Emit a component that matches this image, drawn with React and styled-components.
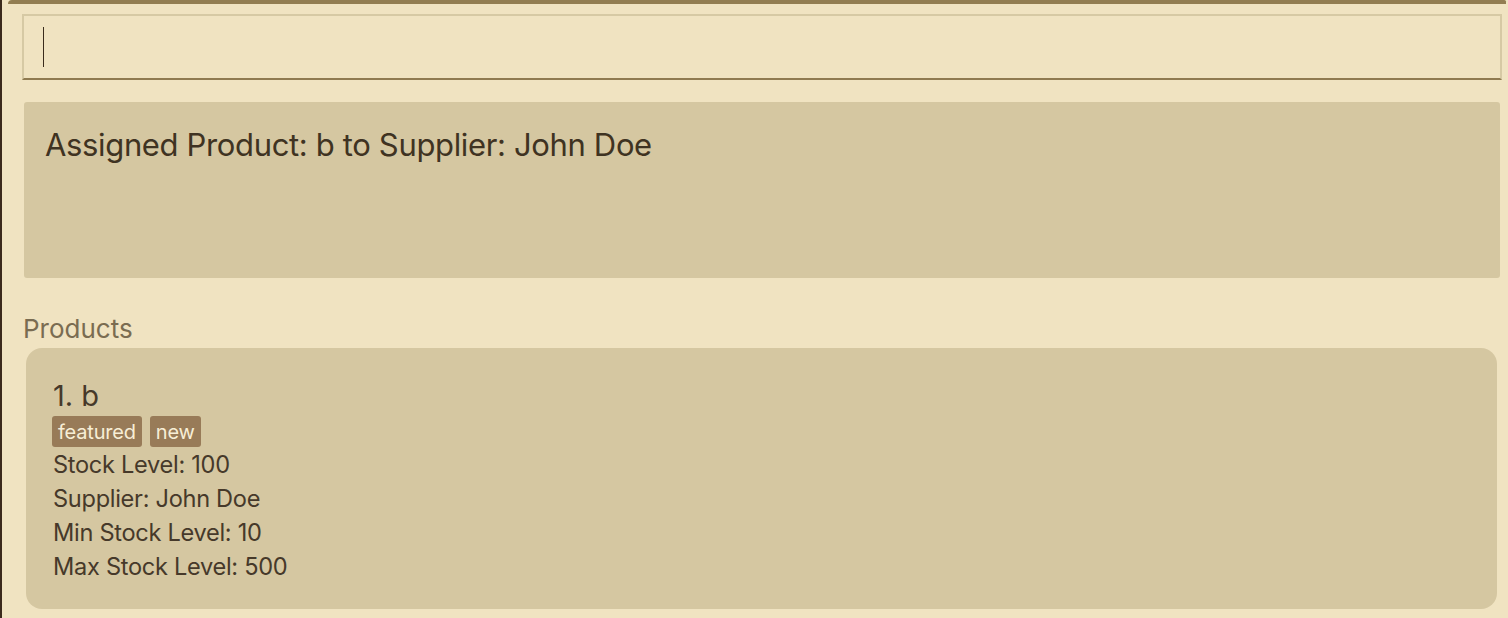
import React from "react";
import styled, { createGlobalStyle } from "styled-components";

const GlobalStyle = createGlobalStyle`
  html, body {
    margin: 0;
    padding: 0;
    background: #f0e3c1;
  }
  body {
    font-family: Inter, "Noto Sans", "Liberation Sans", sans-serif;
    color: #45392a;
  }
`;

const Window = styled.div`
  width: 1508px;
  height: 618px;
  box-sizing: border-box;
  background: #f0e3c1;
  border-left: 2px solid #3b2a1c;
  display: flex;
  flex-direction: column;
  overflow: hidden;
`;

const TopBar = styled.div`
  height: 4px;
  margin-left: 6px;
  margin-right: 2px;
  background: #927d51;
  border-top-left-radius: 10px;
  border-top-right-radius: 4px;
`;

const Content = styled.div`
  display: flex;
  flex-direction: column;
  padding: 10px 6px 0 20px;
`;

const CommandBox = styled.div`
  height: 66px;
  box-sizing: border-box;
  border: 2px solid #d6c9a4;
  border-bottom: 2px solid #8f7a50;
  background: #f0e3c1;
  display: flex;
  align-items: center;
  padding-left: 19px;
`;

const Caret = styled.div`
  width: 1px;
  height: 40px;
  background: #3b2c1c;
`;

const ResultBox = styled.div`
  margin: 22px 2px 0 2px;
  height: 176px;
  box-sizing: border-box;
  background: #d5c7a1;
  border-radius: 3px;
  padding: 24px 21px;
  font-size: 31px;
  letter-spacing: -0.35px;
  color: #3f3322;
`;

const SectionTitle = styled.div`
  margin: 35px 0 0 1px;
  font-size: 26px;
  color: #7a6c51;
  letter-spacing: 0;
  line-height: 32px;
`;

const Card = styled.div`
  margin: 3px 5px 0 4px;
  height: 261px;
  box-sizing: border-box;
  background: #d5c7a1;
  border-radius: 16px;
  padding: 30px 27px 0;
  display: flex;
  flex-direction: column;
`;

const CardTitle = styled.div`
  font-size: 29px;
  line-height: 36px;
  color: #46392a;
`;

const Tags = styled.div`
  display: flex;
  gap: 8px;
  margin: 2px 0 1px -1px;
`;

const Tag = styled.span`
  display: flex;
  align-items: center;
  height: 31px;
  background: #987b58;
  color: #f7eed6;
  font-size: 20px;
  padding: 0 6px;
  border-radius: 3px;
  letter-spacing: -0.2px;
`;

const Field = styled.div`
  font-size: 23.6px;
  line-height: 34px;
  letter-spacing: -0.3px;
  color: #46392a;
`;

export default function App() {
  const product = {
    name: "b",
    tags: ["featured", "new"],
    fields: [
      "Stock Level: 100",
      "Supplier: John Doe",
      "Min Stock Level: 10",
      "Max Stock Level: 500",
    ],
  };

  return (
    <>
      <GlobalStyle />
      <Window>
        <TopBar />
        <Content>
          <CommandBox>
            <Caret />
          </CommandBox>
          <ResultBox>Assigned Product: b to Supplier: John Doe</ResultBox>
          <SectionTitle>Products</SectionTitle>
          <Card>
            <CardTitle>1. {product.name}</CardTitle>
            <Tags>
              {product.tags.map((t) => (
                <Tag key={t}>{t}</Tag>
              ))}
            </Tags>
            {product.fields.map((f) => (
              <Field key={f}>{f}</Field>
            ))}
          </Card>
        </Content>
      </Window>
    </>
  );
}
